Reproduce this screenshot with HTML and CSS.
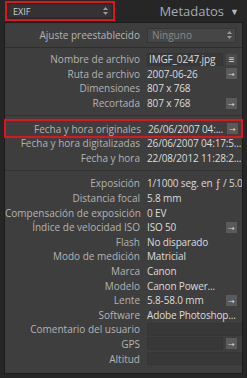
FILE: index.html
```html
<!DOCTYPE html>
<html lang="es">
<head>
  <meta charset="UTF-8">
  <title>Metadatos</title>
  <link rel="stylesheet" href="styles.css">
</head>
<body>

  <div class="cabecera">
    <div class="selector selector-exif resaltado">
      <span>EXIF</span>
      <svg class="flechas" width="5" height="8" viewBox="0 0 5 8"><path d="M2.5 0L5 3H0Z M2.5 8L5 5H0Z" fill="#9a9a9a"/></svg>
    </div>
    <div class="titulo">Metadatos <span class="triangulo">&#9660;</span></div>
  </div>

  <div class="panel">
    <div class="fila-ajuste">
      <span class="etiqueta">Ajuste preestablecido</span>
      <div class="selector selector-ajuste">
        <span>Ninguno</span>
        <svg class="flechas" width="5" height="8" viewBox="0 0 5 8"><path d="M2.5 0L5 3H0Z M2.5 8L5 5H0Z" fill="#9a9a9a"/></svg>
      </div>
    </div>

    <div class="grupo">
      <div class="fila"><span class="etiqueta">Nombre de archivo</span><span class="valor"><span class="caja">IMGF_0247.jpg</span><span class="boton lista">&#8801;</span></span></div>
      <div class="fila"><span class="etiqueta">Ruta de archivo</span><span class="valor"><span class="texto">2007-06-26</span><span class="boton">&#10141;</span></span></div>
      <div class="fila"><span class="etiqueta">Dimensiones</span><span class="valor"><span class="texto">807 x 768</span></span></div>
      <div class="fila"><span class="etiqueta">Recortada</span><span class="valor"><span class="texto">807 x 768</span><span class="boton">&#10141;</span></span></div>
    </div>

    <div class="grupo con-linea">
      <div class="fila resaltado"><span class="etiqueta">Fecha y hora originales</span><span class="valor"><span class="texto">26/06/2007 04:...</span><span class="boton">&#10141;</span></span></div>
      <div class="fila"><span class="etiqueta">Fecha y hora digitalizadas</span><span class="valor"><span class="texto">26/06/2007 04:17:5...</span></span></div>
      <div class="fila"><span class="etiqueta">Fecha y hora</span><span class="valor"><span class="texto">22/08/2012 11:28:2...</span></span></div>
    </div>

    <div class="grupo con-linea">
      <div class="fila"><span class="etiqueta">Exposición</span><span class="valor"><span class="texto">1/1000 seg. en ƒ / 5.0</span></span></div>
      <div class="fila"><span class="etiqueta">Distancia focal</span><span class="valor"><span class="texto">5.8 mm</span></span></div>
      <div class="fila"><span class="etiqueta">Compensación de exposición</span><span class="valor"><span class="texto">0 EV</span></span></div>
      <div class="fila"><span class="etiqueta">Índice de velocidad ISO</span><span class="valor"><span class="texto">ISO 50</span><span class="boton">&#10141;</span></span></div>
      <div class="fila"><span class="etiqueta">Flash</span><span class="valor"><span class="texto">No disparado</span></span></div>
      <div class="fila"><span class="etiqueta">Modo de medición</span><span class="valor"><span class="texto">Matricial</span></span></div>
      <div class="fila"><span class="etiqueta">Marca</span><span class="valor"><span class="texto">Canon</span></span></div>
      <div class="fila"><span class="etiqueta">Modelo</span><span class="valor"><span class="texto">Canon Power...</span></span></div>
      <div class="fila"><span class="etiqueta">Lente</span><span class="valor"><span class="texto">5.8-58.0 mm</span><span class="boton">&#10141;</span></span></div>
      <div class="fila"><span class="etiqueta">Software</span><span class="valor"><span class="texto">Adobe Photoshop...</span></span></div>
      <div class="fila"><span class="etiqueta">Comentario del usuario</span><span class="valor"><span class="caja"></span></span></div>
      <div class="fila"><span class="etiqueta">GPS</span><span class="valor"><span class="caja"></span><span class="boton">&#10141;</span></span></div>
      <div class="fila"><span class="etiqueta">Altitud</span><span class="valor"><span class="caja"></span></span></div>
    </div>
  </div>

</body>
</html>
```

FILE: styles.css
```css
/* --- Generales --- */
body {
  margin: 0;
  background: #262626;
  font-family: 'Open Sans', sans-serif;
  font-size: 10px;
  color: #b4b4b4;
  width: 247px;
  height: 378px;
  overflow: hidden;
}

/* --- Cabecera --- */
.cabecera {
  height: 22px;
  display: flex;
  align-items: center;
  justify-content: space-between;
  padding: 0 8px 0 8px;
}

.titulo {
  font-size: 13px;
  color: #a3abb3;
  display: flex;
  align-items: center;
  gap: 6px;
}
.triangulo {
  font-size: 9px;
  color: #b8b8b8;
}

/* --- Selectores --- */
.selector {
  display: flex;
  align-items: center;
  justify-content: space-between;
  height: 13px;
  background: #3a3a3a;
  border: 1px solid #2c2c2c;
  padding: 0 3px 0 4px;
  box-sizing: border-box;
}
.selector-exif {
  width: 104px;
  height: 14px;
  color: #d0d0d0;
  font-size: 9px;
  background: #333;
}
.selector-ajuste {
  width: 89px;
  height: 15px;
  color: #8a8a8a;
  font-size: 10px;
  background: #464646;
  border-color: #363636;
}
.flechas {
  display: block;
  flex: none;
}

/* --- Panel --- */
.panel {
  margin: 0 4px;
  height: 352px;
  background: #3e3e3e;
  border: 1px solid #1c1c1c;
  box-sizing: border-box;
}

.fila-ajuste {
  display: grid;
  grid-template-columns: 135px 1fr;
  column-gap: 7px;
  align-items: center;
  height: 24px;
  border-bottom: 1px solid #2e2e2e;
}

.grupo {
  padding: 4px 0 0;
}
.con-linea {
  margin-top: 5px;
  padding-top: 5px;
  border-top: 1px solid #333;
}

.fila {
  display: grid;
  grid-template-columns: 135px 95px;
  column-gap: 7px;
  align-items: center;
  height: 14.6px;
}

.etiqueta {
  text-align: right;
  white-space: nowrap;
}

.valor {
  display: flex;
  align-items: center;
  gap: 3px;
  color: #dcdcdc;
  white-space: nowrap;
  letter-spacing: -0.15px;
  overflow: hidden;
}
.texto {
  flex: 1;
  min-width: 0;
  overflow: hidden;
}
.caja {
  flex: 1;
  height: 13px;
  line-height: 11px;
  padding-left: 1px;
  background: #383838;
  border: 1px solid #353535;
  box-sizing: border-box;
}

.boton {
  width: 11px;
  height: 11px;
  margin-right: 5px;
  flex: none;
  background: #5a5a5a;
  color: #d8d8d8;
  font-size: 8px;
  line-height: 11px;
  text-align: center;
}
.boton.lista {
  font-size: 10px;
  background: #4a4a4a;
}

/* --- Marcas rojas --- */
.resaltado {
  outline: 2px solid #e3131b;
  outline-offset: 1px;
}
.fila.resaltado {
  outline-offset: 0;
  margin: 0 1px;
}
```
